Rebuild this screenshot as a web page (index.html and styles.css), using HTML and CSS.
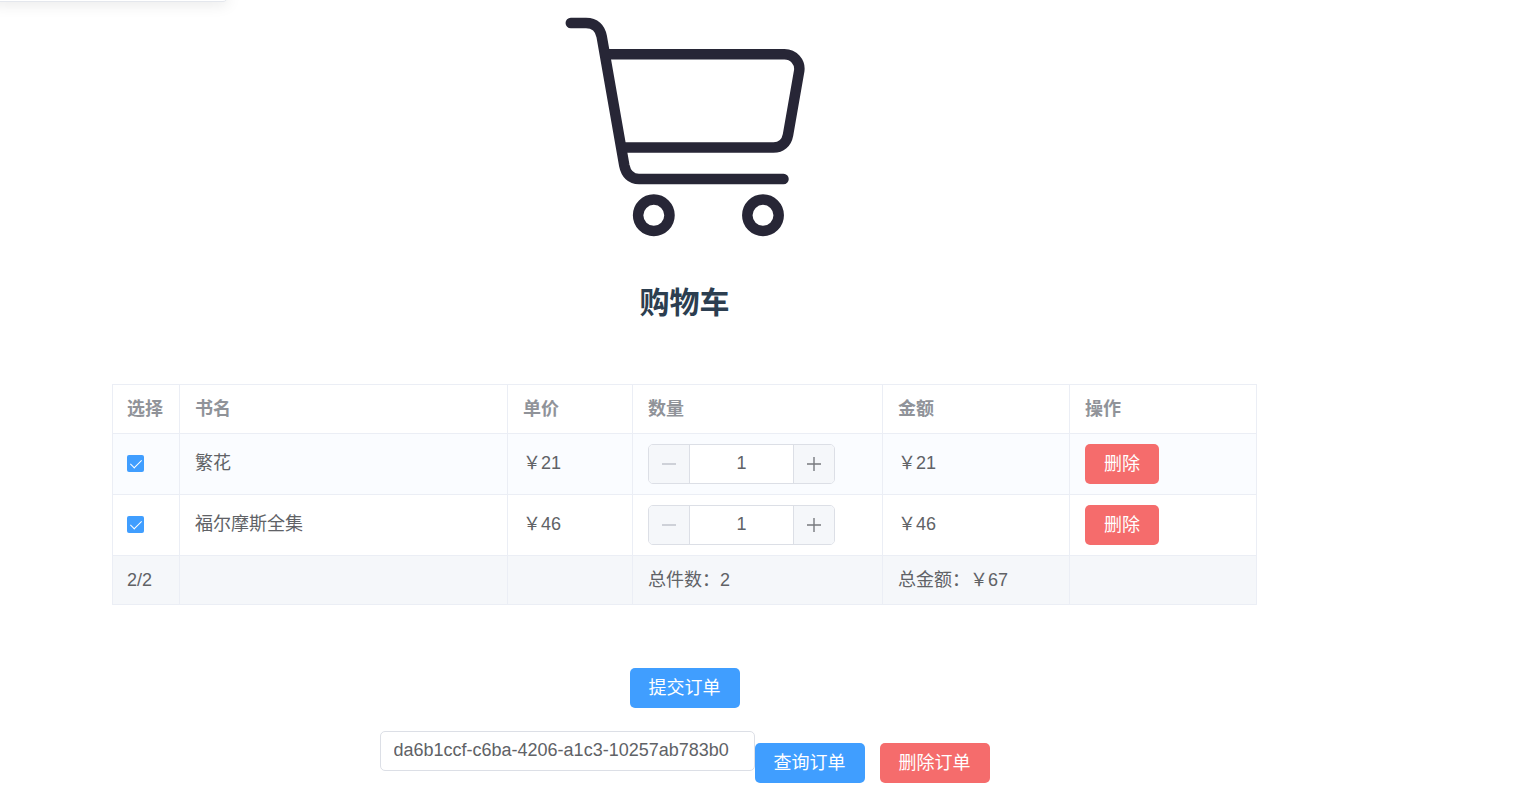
FILE: index.html
```html
<!DOCTYPE html>
<html lang="zh-CN">
<head>
<meta charset="utf-8">
<title>购物车</title>
<link rel="stylesheet" href="styles.css">
</head>
<body>
<div class="dropdown-edge"></div>
<main class="page">
  <svg class="cart-logo" viewBox="0 0 250 250" fill="none" stroke="#272636" stroke-width="10.5" aria-hidden="true">
    <path stroke-linecap="round" d="M10.8 23H26C35 23 40.200 28 41.700 36.500L64.300 165.500C66 174 71 179 79 179H223.500"/>
    <path d="M47 54.200H224.500C233.500 54.200 240.500 62 239.200 71L228 135C226.500 143 221 147.600 213.500 147.600H62"/>
    <circle cx="93.800" cy="215.300" r="15.700"/>
    <circle cx="203" cy="215.300" r="15.700"/>
  </svg>
  <h2 class="title">购物车</h2>

  <table class="cart-table">
    <colgroup>
      <col class="col-check"><col><col class="col-price"><col class="col-count"><col class="col-amount"><col class="col-action">
    </colgroup>
    <thead>
      <tr><th>选择</th><th>书名</th><th>单价</th><th>数量</th><th>金额</th><th>操作</th></tr>
    </thead>
    <tbody>
      <tr class="striped">
        <td class="label"><input class="check" type="checkbox" checked aria-label="选择 繁花"></td>
        <td class="label">繁花</td>
        <td class="label">￥21</td>
        <td>
          <div class="stepper">
            <button class="step" type="button" disabled aria-label="减少"><svg viewBox="0 0 14 14"><path d="M0 7H14"/></svg></button>
            <input class="step-value" type="text" value="1" aria-label="数量">
            <button class="step" type="button" aria-label="增加"><svg viewBox="0 0 14 14"><path d="M0 7H14M7 0V14"/></svg></button>
          </div>
        </td>
        <td class="label">￥21</td>
        <td><button class="btn danger" type="button">删除</button></td>
      </tr>
      <tr>
        <td class="label"><input class="check" type="checkbox" checked aria-label="选择 福尔摩斯全集"></td>
        <td class="label">福尔摩斯全集</td>
        <td class="label">￥46</td>
        <td>
          <div class="stepper">
            <button class="step" type="button" disabled aria-label="减少"><svg viewBox="0 0 14 14"><path d="M0 7H14"/></svg></button>
            <input class="step-value" type="text" value="1" aria-label="数量">
            <button class="step" type="button" aria-label="增加"><svg viewBox="0 0 14 14"><path d="M0 7H14M7 0V14"/></svg></button>
          </div>
        </td>
        <td class="label">￥46</td>
        <td><button class="btn danger" type="button">删除</button></td>
      </tr>
    </tbody>
    <tfoot>
      <tr><td>2/2</td><td></td><td></td><td>总件数：2</td><td>总金额：￥67</td><td></td></tr>
    </tfoot>
  </table>

  <button class="btn primary" type="button">提交订单</button>

  <form class="order-form">
    <input class="order-id" type="text" value="da6b1ccf-c6ba-4206-a1c3-10257ab783b0" aria-label="订单号">
    <div class="order-actions">
      <button class="btn primary" type="button">查询订单</button>
      <button class="btn danger" type="button">删除订单</button>
    </div>
  </form>
</main>
</body>
</html>
```

FILE: styles.css
```css
* { box-sizing: border-box; }

body {
  margin: 0;
  background: #fff;
  color: #606266;
  font-family: "Liberation Sans", "Noto Sans CJK SC", sans-serif;
  font-size: 18px;
  line-height: 28px;
}

button, input { font: inherit; }

/* bottom edge of the menu panel that hangs over the page */
.dropdown-edge {
  position: absolute;
  top: -10px;
  left: -10px;
  width: 238px;
  height: 12px;
  border: 1px solid #e4e7ed;
  border-radius: 5px;
  background: #fff;
  box-shadow: 0 2px 15px rgba(0, 0, 0, 0.1);
}

.page {
  display: flex;
  flex-direction: column;
  align-items: center;
  padding: 0 275px 24px 112px;
}

.cart-logo {
  width: 250px;
  height: 250px;
}

.title {
  margin: 35px 0 63px;
  color: #2c3e50;
  font-size: 30px;
  line-height: 36px;
}

.cart-table {
  width: 100%;
  margin-bottom: 63px;
  border-collapse: collapse;
  table-layout: fixed;
}

.col-check { width: 67px; }
.col-price { width: 125px; }
.col-count { width: 250px; }
.col-amount, .col-action { width: 187px; }

.cart-table th,
.cart-table td {
  padding: 10px 15px;
  border: 1px solid #ebeef5;
  text-align: left;
}

.cart-table th:first-child,
.cart-table td:first-child { padding-left: 14px; }

.cart-table .label { padding-bottom: 12px; }

.cart-table th {
  color: #909399;
  font-weight: 700;
}

.striped { background: #fafcff; }
.cart-table tfoot { background: #f5f7fa; }

.check {
  display: block;
  width: 17px;
  height: 17px;
  margin: 0;
  border-radius: 2px;
  background: #409eff;
  appearance: none;
}

.check:checked::after {
  display: block;
  width: 5px;
  height: 10px;
  margin: 2px auto;
  border: solid #fff;
  border-width: 0 1px 1px 0;
  content: "";
  transform: rotate(45deg);
}

.stepper {
  display: flex;
  width: 187px;
  height: 40px;
  overflow: hidden;
  border: 1px solid #dcdfe6;
  border-radius: 5px;
  background: #fff;
}

.step {
  display: flex;
  flex: 0 0 40px;
  align-items: center;
  justify-content: center;
  padding: 0;
  border: 0;
  background: #f5f7fa;
  color: #77797e;
}

.step:disabled { color: #c0c4cc; }

.step svg {
  width: 14px;
  height: 14px;
  fill: none;
  stroke: currentColor;
  stroke-width: 1.4;
}

.step-value {
  flex: 1;
  min-width: 0;
  padding: 0 0 2px;
  border: solid #dcdfe6;
  border-width: 0 1px;
  color: #606266;
  text-align: center;
}

.btn {
  display: block;
  height: 40px;
  padding: 0 19px;
  border: 0;
  border-radius: 5px;
  color: #fff;
  white-space: nowrap;
}

.primary { background: #409eff; }
.danger { background: #f56c6c; }

.order-form {
  display: flex;
  align-items: flex-start;
  margin-top: 23px;
}

.order-id {
  width: 375px;
  height: 40px;
  padding: 0 13px 2px;
  border: 1px solid #dcdfe6;
  border-radius: 5px;
  background: #fff;
  color: #606266;
}

.order-actions {
  display: flex;
  gap: 15px;
  margin-top: 12px;
}
```
